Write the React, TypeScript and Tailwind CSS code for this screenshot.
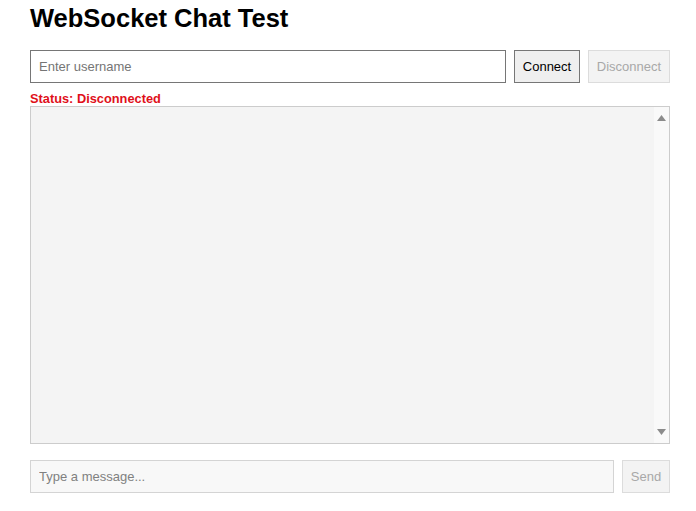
import React from 'react';

const App = () => {
  return (
    <div className="min-h-screen bg-white pl-[30px] pr-[26px] pt-[4px] font-['Liberation_Sans',Arial,sans-serif] text-black">
      <h1 className="text-[25.5px] leading-[29px] font-bold mb-[17px]">WebSocket Chat Test</h1>

      <div className="flex gap-2 h-[33px]">
        <input
          type="text"
          placeholder="Enter username"
          className="flex-1 min-w-0 h-full border border-[#767676] bg-white px-2 text-[13px] placeholder:text-[#757575] outline-none"
        />
        <button className="h-full w-[66px] border border-[#767676] bg-[#efefef] text-[13px] text-black">Connect</button>
        <button disabled className="h-full w-[82px] border border-[#dcdcdc] bg-[#f3f3f3] text-[13px] text-[#a8a8a8]">Disconnect</button>
      </div>

      <div className="mt-2 text-[12.8px] leading-[15px] font-bold text-[#e0101a]">Status: Disconnected</div>

      <div className="flex h-[338px] border border-[#cccccc] bg-[#f4f4f4]">
        <div className="flex-1"></div>
        <div className="w-[15px] bg-[#f9f9f9] flex flex-col items-center justify-between pt-[8px] pb-[8px]">
          <svg width="9" height="6" viewBox="0 0 9 6"><polygon points="4.5,0 9,6 0,6" fill="#8b8b8b" /></svg>
          <svg width="9" height="6" viewBox="0 0 9 6"><polygon points="0,0 9,0 4.5,6" fill="#8b8b8b" /></svg>
        </div>
      </div>

      <div className="flex gap-2 h-[33px] mt-4">
        <input
          type="text"
          disabled
          placeholder="Type a message..."
          className="flex-1 min-w-0 h-full border border-[#d4d4d4] bg-[#f8f8f8] px-2 text-[13px] placeholder:text-[#808080] outline-none"
        />
        <button disabled className="h-full w-[48px] border border-[#dcdcdc] bg-[#f3f3f3] text-[13px] text-[#a8a8a8]">Send</button>
      </div>
    </div>
  );
};

export default App;
